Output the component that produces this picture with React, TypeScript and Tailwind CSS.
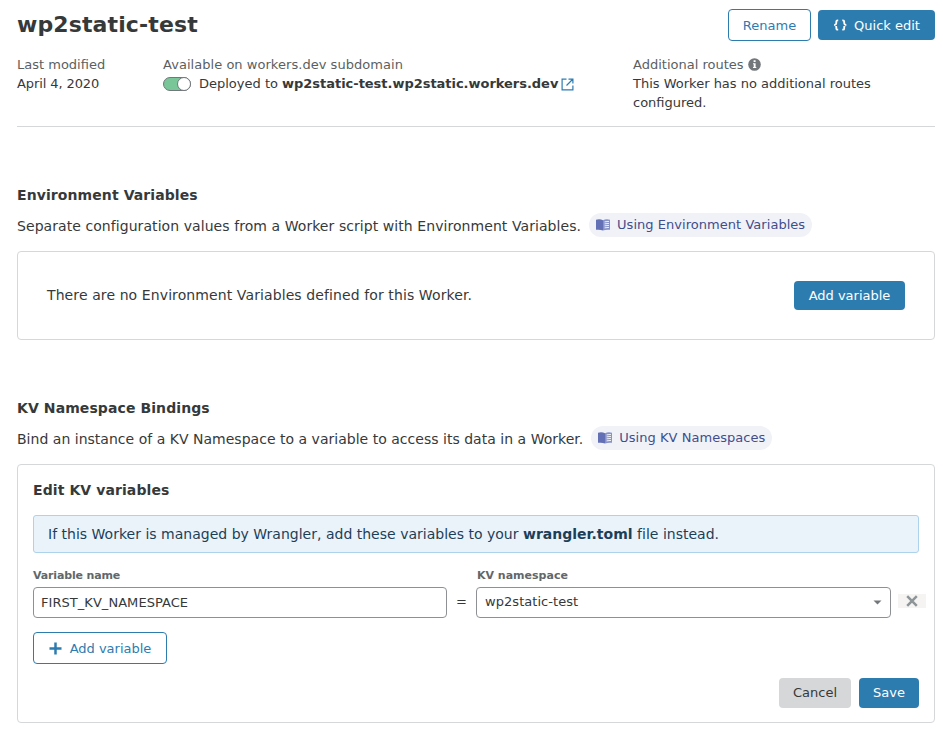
import React from 'react';

const solidButton =
  'flex items-center justify-center rounded-[4px] bg-[#2c7cb0] text-[13px] text-white';
const outlineButton =
  'flex items-center justify-center rounded-[4px] border border-[#2c7cb0] bg-white pt-px text-[13px] text-[#2c7cb0]';

function BookIcon() {
  return (
    <svg className="mr-[7px] shrink-0" width="14" height="12" viewBox="0 0 14 12">
      <path d="M0 .7Q4-.2 7 1.200V11.500Q4 10.300 0 10.800z" fill="#6370b5" />
      <path d="M7 1.200Q10-.2 14 .7V10.800Q10 10.300 7 11.500z" fill="#8792cb" />
      <path d="M8.500 2.900L13 2.400M8.500 4.900L13 4.400M8.500 6.900L13 6.400M8.500 8.900L13 8.400" stroke="#f1f2f8" strokeWidth="1" />
    </svg>
  );
}

function DocLink({ children }: { children: React.ReactNode }) {
  return (
    <a className="ml-2 flex h-6 items-center rounded-full bg-[#f1f2f8] px-[7px] text-[13px] tracking-[0.04px] text-[#404e8c]">
      <BookIcon />
      {children}
    </a>
  );
}

type SectionProps = { title: string; text: string; link: string; textClass: string };

function Section({ title, text, link, textClass }: SectionProps) {
  return (
    <>
      <h2 className="h-[21px] text-[14px] leading-[21px] font-bold tracking-[0.09px]">{title}</h2>
      <div className="mt-[7px] flex h-6 items-center text-[14px]">
        <p className={`pt-[2px] ${textClass}`}>{text}</p>
        <DocLink>{link}</DocLink>
      </div>
    </>
  );
}

export default function App() {
  return (
    <main className="h-[729px] w-[943px] overflow-hidden bg-white pr-2 pl-[17px] font-['DejaVu_Sans',sans-serif] whitespace-nowrap text-[#36393a]">
      <header className="flex h-[50px] items-center justify-between">
        <h1 className="text-[22px] leading-[30px] font-bold tracking-[0.12px]">wp2static-test</h1>
        <div className="flex items-center gap-[7px]">
          <button className={`${outlineButton} h-8 w-[83px]`}>Rename</button>
          <button className={`${solidButton} h-[30px] w-[117px] pt-px`}>
            <svg className="mr-[6px] -mt-px" width="15" height="12" viewBox="0 0 15 12" fill="none" stroke="white" strokeWidth="1.8">
              <path d="M5.200 1.300H4.700Q3.300 1.300 3.300 2.600V4.200Q3.300 5.700 1.300 6Q3.300 6.300 3.300 7.800V9.400Q3.300 10.700 4.700 10.700H5.200M9.300 1.300H9.800Q11.200 1.300 11.200 2.600V4.200Q11.200 5.700 13.200 6Q11.200 6.300 11.200 7.800V9.400Q11.200 10.700 9.800 10.700H9.300" />
            </svg>
            Quick edit
          </button>
        </div>
      </header>

      <section className="flex h-[77px] border-b border-[#d5d7d8] pt-[5px] text-[13px] leading-[19px]">
        <div className="w-[146px]">
          <div className="text-[#5b5f62]">Last modified</div>
          <div className="tracking-[-0.1px]">April 4, 2020</div>
        </div>
        <div className="w-[470px]">
          <div className="tracking-[0.04px] text-[#5b5f62]">Available on workers.dev subdomain</div>
          <div className="flex items-center">
            <span className="mt-px mr-2 flex h-[14px] w-7 justify-end rounded-full border border-[#72777b] bg-[#79c698]">
              <span className="-my-px -mr-px size-[14px] rounded-full border border-[#72777b] bg-white" />
            </span>
            <span>
              Deployed to <b className="tracking-[-0.03px]">wp2static-test.wp2static.workers.dev</b>
            </span>
            <svg className="ml-[3px] mt-px" width="13" height="13" viewBox="0 0 13 13" fill="none" stroke="#2c7cb0" strokeWidth="1.2">
              <path d="M5.500 1.100H1.100v10.800h10.800V7.500M5.500 7.500l6-6M7.500 1.100h4.400v4.400" />
            </svg>
          </div>
        </div>
        <div>
          <div className="flex items-center text-[#5b5f62]">
            Additional routes
            <svg className="ml-1" width="13" height="13" viewBox="0 0 13 13">
              <circle cx="6.500" cy="6.500" r="6.300" fill="#72777b" />
              <path d="M5.600 2.300h2v1.600h-2zM5 5.200h2.600v3.900h.7v1H5v-1h.7V6.200H5z" fill="white" />
            </svg>
          </div>
          <div>
            This Worker has no additional routes
            <br />
            configured.
          </div>
        </div>
      </section>

      <section className="pt-[58px]">
        <Section
          title="Environment Variables"
          text="Separate configuration values from a Worker script with Environment Variables."
          link="Using Environment Variables"
          textClass="tracking-[0.066px]"
        />
        <div className="mt-[14px] flex h-[89px] items-center justify-between rounded-[4px] border border-[#d5d7d8] px-[29px] text-[14px]">
          <p className="tracking-[0.1px]">There are no Environment Variables defined for this Worker.</p>
          <button className={`${solidButton} h-[29px] w-[111px]`}>Add variable</button>
        </div>
      </section>

      <section className="pt-[58px]">
        <Section
          title="KV Namespace Bindings"
          text="Bind an instance of a KV Namespace to a variable to access its data in a Worker."
          link="Using KV Namespaces"
          textClass="tracking-[0.018px]"
        />
        <div className="mt-[14px] h-[259px] rounded-[4px] border border-[#d5d7d8] px-[15px] pt-[15px]">
          <h3 className="text-[14px] leading-[21px] font-bold tracking-[0.09px]">Edit KV variables</h3>
          <div className="mt-[14px] flex h-[38px] items-center rounded-[3px] border border-[#add2eb] bg-[#ebf3fa] px-[14px] text-[14px] tracking-[0.01px] text-[#1c3f58]">
            <p>
              If this Worker is managed by Wrangler, add these variables to your <b>wrangler.toml</b> file instead.
            </p>
          </div>
          <div className="mt-[15px] flex items-end">
            <label className="w-[414px] shrink-0 text-[11px] leading-4 font-bold text-[#62676a]">
              <span className="tracking-[-0.15px]">Variable name</span>
              <div className="mt-[3px] flex h-[31px] items-center rounded-[4px] border border-[#8e9194] px-[7px] text-[13px] font-normal tracking-[0.05px] text-[#36393a]">
                FIRST_KV_NAMESPACE
              </div>
            </label>
            <span className="flex h-[31px] w-[29px] shrink-0 items-center justify-center pb-[2px] text-[13px]">=</span>
            <label className="w-[415px] shrink-0 text-[11px] leading-4 font-bold text-[#62676a]">
              <span className="pl-px">KV namespace</span>
              <div className="mt-[3px] flex h-[31px] items-center justify-between rounded-[4px] border border-[#8e9194] px-2 pb-px text-[13px] font-normal tracking-[0.05px] text-[#36393a]">
                wp2static-test
                <svg className="mt-px" width="9" height="5" viewBox="0 0 9 5">
                  <path d="M.5.5h8l-4 4z" fill="#72777b" />
                </svg>
              </div>
            </label>
            <button className="mb-[10px] ml-[7px] flex h-[14px] w-7 shrink-0 items-center justify-center bg-[#f5f4f3]">
              <svg width="12" height="12" viewBox="0 0 12 12" stroke="#8e9598" strokeWidth="2.500">
                <path d="M1.200 1.200l9.600 9.600M10.800 1.200l-9.600 9.600" />
              </svg>
            </button>
          </div>
          <button className={`${outlineButton} mt-[14px] h-8 w-[134px]`}>
            <svg className="-mt-px mr-2" width="13" height="13" viewBox="0 0 13 13" stroke="#2c7cb0" strokeWidth="2.500">
              <path d="M6.500 .5v12M.5 6.500h12" />
            </svg>
            Add variable
          </button>
          <div className="mt-[14px] flex justify-end gap-2">
            <button className="h-[30px] w-[72px] rounded-[4px] bg-[#d5d7d8] text-[13px]">Cancel</button>
            <button className={`${solidButton} h-[30px] w-[60px]`}>Save</button>
          </div>
        </div>
      </section>
    </main>
  );
}
